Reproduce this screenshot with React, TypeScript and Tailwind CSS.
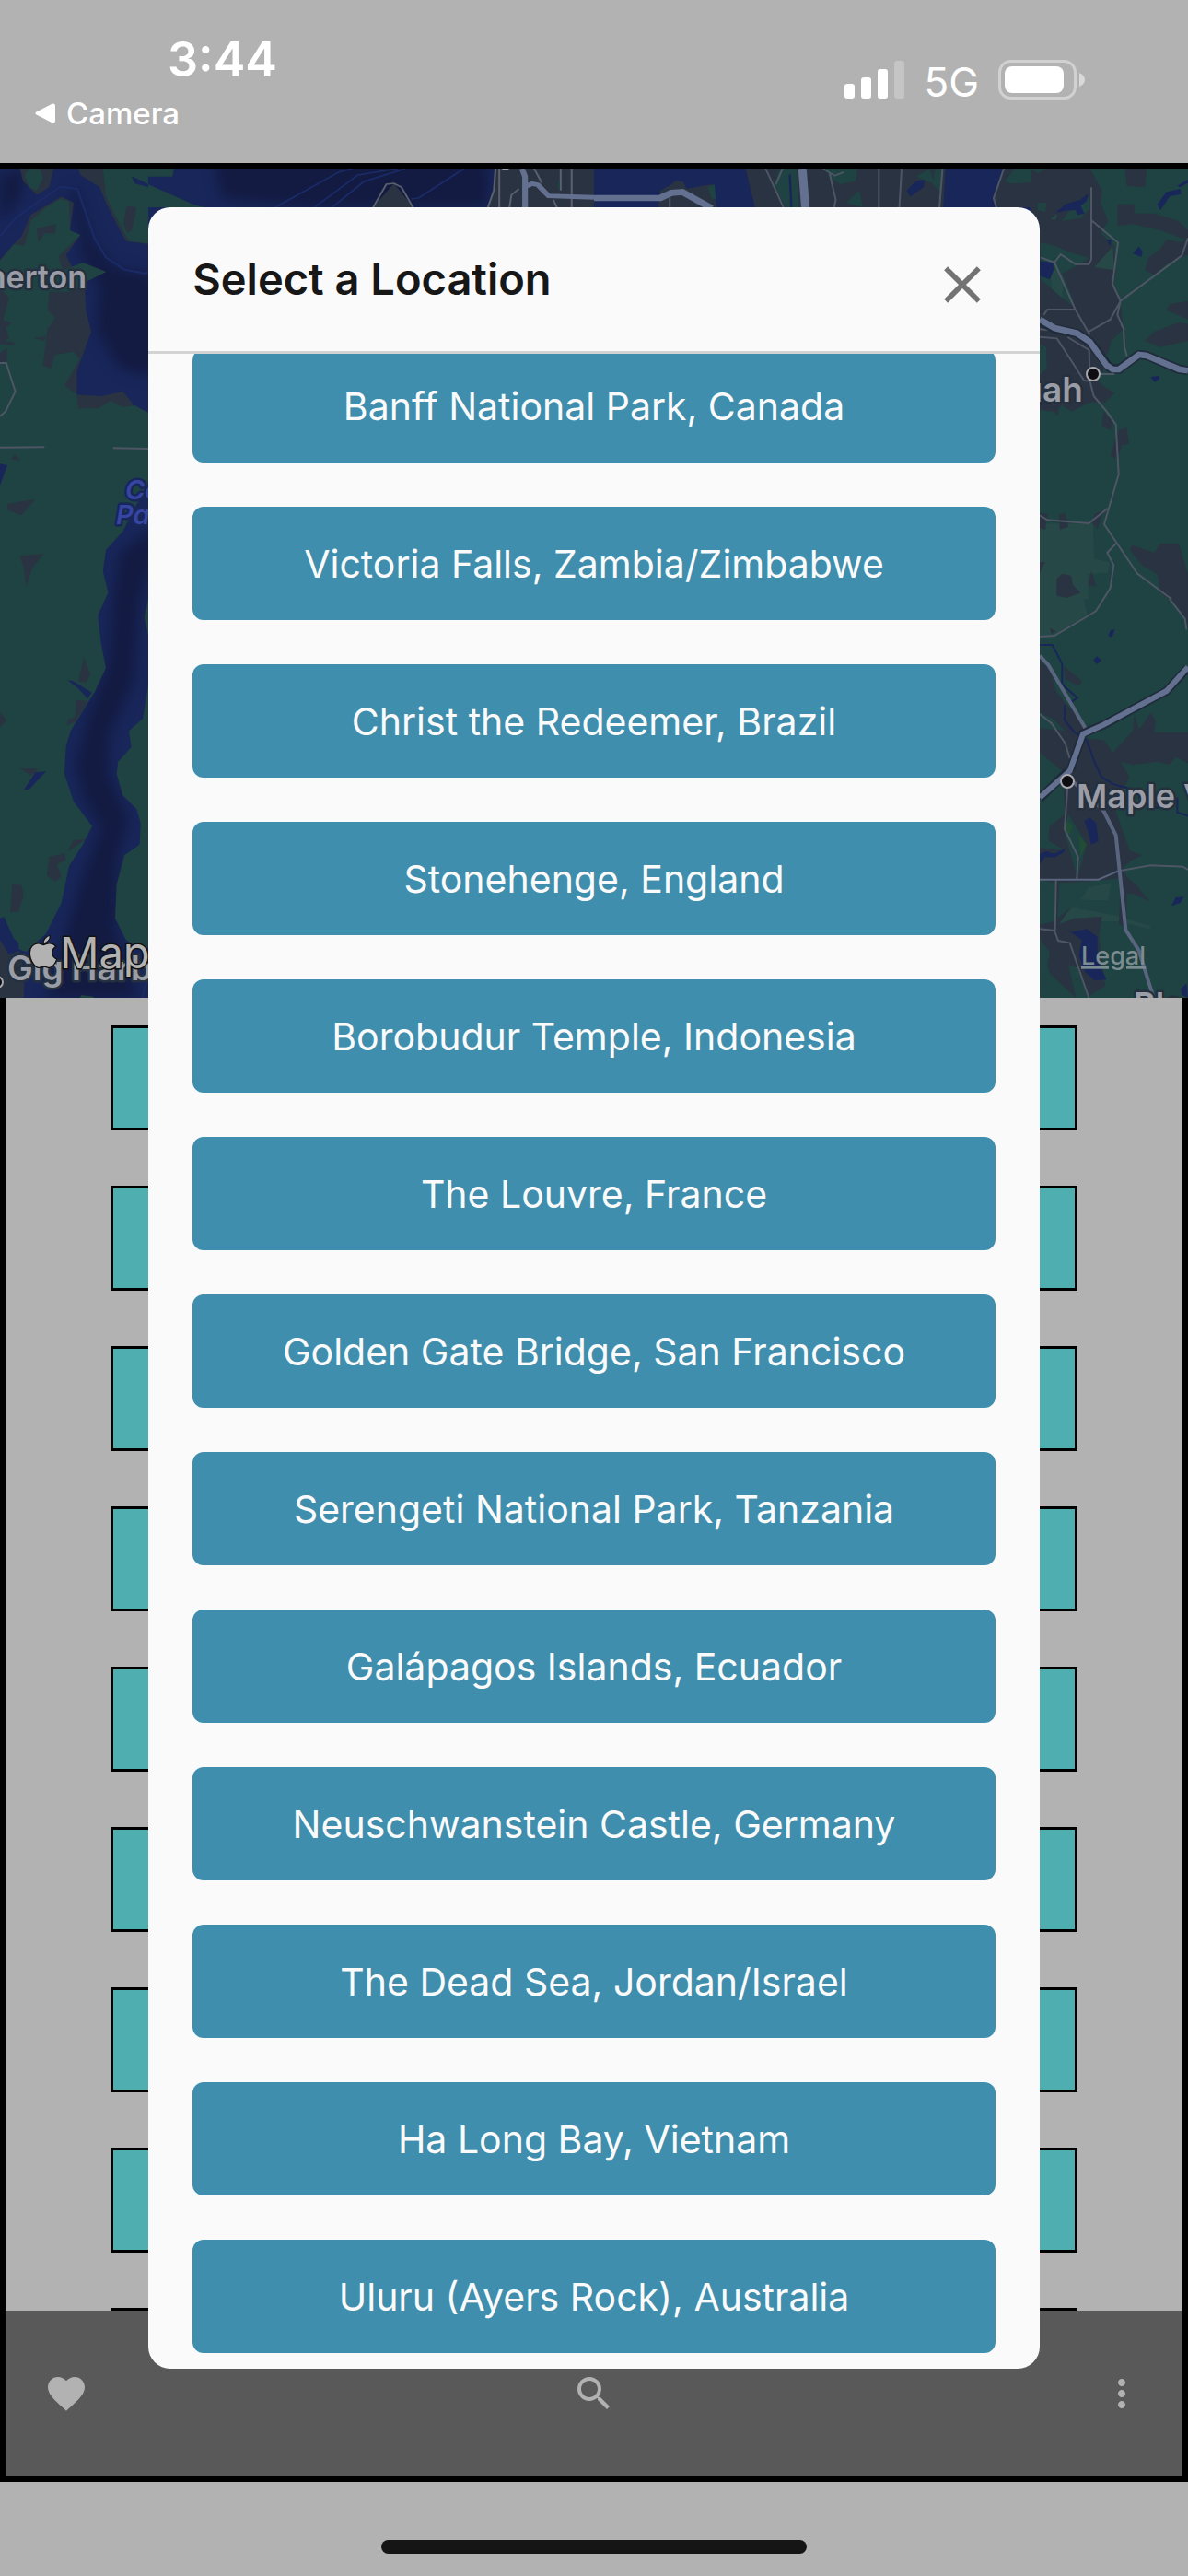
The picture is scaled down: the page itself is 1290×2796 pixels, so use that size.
import { FaApple } from "react-icons/fa";
import { MdClose, MdFavorite, MdMoreVert, MdSearch } from "react-icons/md";

const locations = [
  "Banff National Park, Canada",
  "Victoria Falls, Zambia/Zimbabwe",
  "Christ the Redeemer, Brazil",
  "Stonehenge, England",
  "Borobudur Temple, Indonesia",
  "The Louvre, France",
  "Golden Gate Bridge, San Francisco",
  "Serengeti National Park, Tanzania",
  "Galápagos Islands, Ecuador",
  "Neuschwanstein Castle, Germany",
  "The Dead Sea, Jordan/Israel",
  "Ha Long Bay, Vietnam",
  "Uluru (Ayers Rock), Australia",
];

function StatusBar() {
  return (
    <header className="flex h-[177px] shrink-0 justify-between text-white">
      <div className="flex flex-col">
        <div className="pt-8 pl-[182px] text-[52px] leading-[66px] font-semibold">3:44</div>
        <a href="#camera" className="flex items-center gap-3 pl-[38px] text-[33px] leading-[50px] font-medium">
          <svg viewBox="0 0 22 22" className="size-[22px]" fill="currentColor" aria-hidden="true">
            <path d="M2 9.2 18.500 .8Q22 -.4 22 3V19Q22 22.400 18.500 21.200L2 12.800Q-1.200 11 2 9.200Z" />
          </svg>
          Camera
        </a>
      </div>
      <div className="mt-[65px] mr-28 flex h-11 items-center gap-5">
        <svg viewBox="0 0 66 42" className="h-[42px] w-[66px]" fill="#fff" aria-label="Signal">
          <rect x="0" y="25" width="11" height="16" rx="3" />
          <rect x="18" y="18" width="11" height="23" rx="3" />
          <rect x="36" y="9" width="11" height="32" rx="3" />
          <rect x="54" y="0" width="11" height="41" rx="3" fillOpacity=".25" />
        </svg>
        <span className="pt-1 text-[44px] leading-[44px]">5G</span>
        <svg viewBox="0 0 95 44" className="h-11 w-[95px]" fill="#fff" aria-label="Battery">
          <rect x="2.500" y="1.500" width="82" height="40" rx="12" fill="none" stroke="#fff" strokeOpacity=".4" strokeWidth="3" />
          <rect x="8" y="7" width="64" height="29" rx="8" />
          <path d="M89 14Q95 17 95 21.500Q95 26 89 29Z" fillOpacity=".5" />
        </svg>
      </div>
    </header>
  );
}

function WestShore() {
  return (
    <>
      {/* Deep channels */}
      <g fill="#131b42" filter="url(#soft)">
        <path d="M232 170H530V225H330L240 215Z" />
        <path d="M0 190 28 184 22 215 0 240Z" />
        <path d="M85 205 100 260 125 290 170 300V410L130 400 105 360 108 310 90 280 76 205Z" />
        <path d="M170 570 130 600 122 655 118 720 95 780 82 830 92 870 110 898 90 950 72 1010 50 1083H150L125 1010 128 930 140 890 118 840 118 800 145 740 152 650 170 600Z" />
      </g>
      <g transform="translate(0 170) scale(.33333)">
        <path fill="#2a3341" d="M65 39 75 80 120 125 160 100 175 39ZM255 39 262 60 325 100 345 150 380 220 410 275 483 285V39ZM0 335 40 290 70 260 100 190 150 160 200 130 240 150 228 240 262 255 215 320 240 370 330 368 345 375 275 410 280 500 297 570 250 700 250 775 330 780 400 765 430 800 440 830 483 830V1060L420 1180 400 1220 345 1280 335 1350 352 1420 320 1490V1500H0Z" />
        <path fill="#1e4342" d="M80 60 95 100 120 110 140 70 130 39H95ZM335 39 345 130 380 200 420 275 483 283V39ZM0 340 45 285 80 290 100 210 150 165 195 138 225 145 228 240 262 255 190 325 205 370 270 345 345 375 275 410 230 440 160 440 155 500 180 525 155 560 150 600 140 680 165 690 180 645 240 635 260 660 210 745 250 775 255 820 320 820 360 795 400 815 440 810 483 835V1060L420 1180 400 1220 345 1280 335 1350 352 1420 320 1490V1500H0V610L30 590 10 530 30 460 0 430Z" />
        <path fill="#2a3341" d="M120 235 183 220 180 250 145 250 125 280ZM412 162 445 165 430 240 415 250 402 220ZM0 530 38 540 15 560 12 600 48 605 45 615 0 610ZM110 590 150 585 145 600ZM25 1130 115 1115 70 1168 22 1150ZM65 1300 142 1293 105 1340 85 1400 78 1340ZM0 640 22 625V665L0 670ZM35 985 50 970 65 990Z" />
        <path fill="#18265a" d="M428 65 483 70V100L440 88ZM0 1000 24 1005 0 1070Z" />
        <g fill="none" stroke="#4e5565" strokeWidth="6">
          <path d="M0 672H20L50 765 18 830 0 845M0 947 145 946M368 949 483 951" />
          <path stroke="#1b2b68" d="M0 260 50 200 195 98 252 105 308 265 345 328 405 368 470 380 483 377" />
        </g>
      </g>
      <g transform="translate(0 650) scale(.33333)">
        <path fill="#1e4342" d="M0 0H330L318 50 330 150 345 225 310 300 230 430 215 480 210 570 240 660 300 740 270 800 225 870 200 990 150 1090 85 1150 60 1140 15 1040 0 1040ZM483 280 465 390 420 430 428 482 385 530 380 570 400 640 445 685 458 730 455 800 405 835 380 930 375 1040 410 1110 440 1130 483 1135ZM483 0 470 60 483 120Z" />
        <path fill="#2a3341" d="M273 190 295 245 280 272 255 270ZM247 330 288 332 245 400 217 412 222 392 245 385ZM160 840 210 828 215 850 185 865 200 905 180 920 153 900ZM40 930 70 932 77 965 60 1020 33 1020ZM218 825 240 785 280 783ZM0 370 22 395 0 418ZM65 552 122 552 120 562 100 575ZM0 1080 60 1140 80 1210 78 1299H0Z" />
        <path fill="#18265a" d="M220 265 238 268 300 305 285 325 255 292ZM78 622 115 565 150 562 95 620ZM0 1040 15 1035 22 1085 60 1120 62 1145 30 1160 0 1110Z" />
        <path fill="#1e4342" d="M260 1299 265 1290 305 1295V1299Z" />
        <path fill="none" stroke="#1b2b68" strokeWidth="5" d="M465 1299Q470 1260 483 1240" />
      </g>
    </>
  );
}

function NorthShore() {
  return (
    <>
      <g transform="scale(.41135 .33333)">
        <path fill="#2a3341" d="M985 675 1040 597 1090 675ZM1308 549 1300 620 1288 675H1568V549Z" />
        <path fill="none" stroke="#5a606c" strokeWidth="5" d="M985 675 1020 600 1040 597 1060 610 1090 675M1308 549 1304 620 1288 675M1318 549V675M1345 675 1350 635 1370 615M1410 549 1430 595M1509 549V675M1480 549V620M1460 650 1470 675" />
        <path fill="none" stroke="#1b2b68" strokeWidth="5" d="M727 675 895 560 930 549M830 675 945 570 1050 549M877 675 960 592 1070 549M1085 648 1105 645 1225 549" />
        <path fill="none" stroke="#64708f" strokeWidth="15" d="M1378 549 1386 575V675M1386 608 1405 598 1420 602 1448 638 1568 643" />
        <path fill="#1e4342" d="M1473 590H1478V615H1473ZM440 549H459L455 575H350L400 605 510 665 540 675H391V549Z" />
        <circle cx="1334" cy="540" r="14" fill="#a0a0a8" />
      </g>
      <g transform="translate(645 0) scale(.41135 .33333)">
        <path fill="#18265a" d="M0 549H400L425 675H0Z" />
        <path fill="#2a3341" d="M170 675 175 620 205 600 215 588 235 592 245 615 310 600 325 675ZM400 549 425 675H1568V549Z" />
        <path fill="#1e4342" d="M490 549H535L540 675H505L475 600ZM605 549H695L690 590 650 600 625 580ZM300 610 318 600 322 650 310 645ZM665 660 700 620 710 675ZM850 575 885 549 900 600ZM900 549H918L914 625 895 600ZM1085 590 1110 549H1185L1220 590 1100 598Z" />
        <path fill="#18265a" d="M928 549H1082L1055 650 1062 675H922ZM825 620 850 590 873 585 870 610 835 640ZM514 570 520 568 524 675H518Z" />
        <path fill="none" stroke="#4e5565" strokeWidth="5" d="M453 549 500 675M498 549 480 600M605 549 635 572 660 560M622 565 638 650 634 675M752 549V675M812 549 806 675M920 549 912 675M1082 549 1055 645 1062 675M200 645V675" />
        <path fill="none" stroke="#64708f" strokeWidth="20" d="M0 645H175L205 628 233 625 310 678" />
        <path fill="none" stroke="#64708f" strokeWidth="22" d="M550 549 558 675" />
      </g>
    </>
  );
}

function EastShore() {
  return (
    <>
      <g transform="translate(1120 170) scale(.33333)">
        <path fill="#2a3341" d="M0 39H510V1500H0Z" />
        <path fill="#1e4342" d="M0 39H45L20 55ZM190 39H305L310 95 370 100 375 39H510V240L480 210 400 185H335V155H280V225L330 220 420 240 500 270 490 280 440 270 420 300 380 330 370 370 400 385 440 350 510 320V470L450 480 440 500 510 530V545L480 540 400 570 370 600 420 620 510 600V1360L480 1260 420 1260 400 1290 330 1265 320 1280 360 1330 410 1360 420 1420 500 1480 510 1500H27V825L70 830 100 810 130 830 190 800 240 800 270 770 230 745 215 720 240 690 230 650 250 640 260 600 300 560 290 480 265 415 275 380 270 290 225 250 250 210 225 150 230 110ZM20 150 50 150 45 180 20 175ZM30 280 75 290 120 310 190 330 140 360 100 380 130 450 140 490 100 460 30 400ZM100 210 120 180 190 130 190 170 160 200ZM27 610 48 620 50 690 27 710Z" />
        <path fill="#264846" d="M27 1195H200L205 1310 255 1320 250 1355 185 1360V1480L170 1500H27ZM205 360 250 310 265 290 270 370ZM62 370 90 365 105 400 100 460 65 430ZM60 205 85 185 80 205Z" />
        <path fill="#2a3341" d="M82 1375 100 1358 130 1365 135 1395 160 1420 115 1437 82 1430ZM285 890 310 882 318 935 295 940 280 985 258 975 270 930ZM235 830 265 865 260 892 228 878ZM195 1350 212 1400 185 1395ZM90 1165 110 1160 120 1205 92 1215ZM27 1160 52 1165 45 1215 27 1210ZM205 1165 235 1150 215 1215 200 1195ZM27 1320 45 1320 27 1355ZM60 815 90 820 85 845Z" />
        <path fill="#18265a" d="M80 182 110 155 160 140 185 120 180 145 160 160 172 185 150 190 145 175 120 175ZM410 155 440 115 485 105 488 122 450 130 420 175ZM475 95 510 75V85L485 100ZM27 340 70 345 72 370 60 400 27 388ZM330 315 350 293 362 310 358 327ZM245 270 262 270 255 292ZM388 718 415 713 418 722 402 735ZM388 722 398 715Z" />
        <path fill="none" stroke="#4e5565" strokeWidth="6" d="M195 100V335L187 350H143L95 318 75 345 30 328M195 207 282 280 264 415 290 470 280 515 300 560 303 620 311 650M290 470 490 322 510 265M290 470 257 530 187 570M75 345 143 498 190 580M143 498H52L40 515M27 562 60 565M27 587 83 592 172 730H190M118 588 188 630 190 730 203 780 245 830 275 872 284 1035 237 1197 345 1358 455 1440 500 1500M27 1168 52 1183 187 1194 248 1145M275 1260 247 1290 268 1330 257 1405 210 1480 175 1500M220 708H270M292 545 303 565" />
        <path fill="none" stroke="#1f2a3a" strokeWidth="30" d="M27 535 75 560 148 575 190 603 255 688 285 692 350 645 375 648 480 692 510 697" />
        <path fill="none" stroke="#64708f" strokeWidth="20" d="M27 530 75 558 148 575 190 603 245 680 265 693H285L350 645 375 648 480 692 510 697" />
      </g>
      <g transform="translate(1120 650) scale(.33333)">
        <path fill="#1e4342" d="M27 0H510V1299H27Z" />
        <path fill="#264846" d="M27 0H170L182 50 70 120 27 122ZM185 940 260 925 250 982 160 980ZM135 1005 270 1030 388 1065 385 1075 280 1050 110 1050 60 1075Z" />
        <path fill="#2a3341" d="M455 0H510V100L500 60ZM60 95 80 105 65 115ZM105 220 165 268 155 285 110 260ZM27 200 60 230 80 300 110 340 170 400 180 455 235 460 265 500 330 430 335 375 350 425 390 370 405 400 400 435H510V535L470 515 450 540 410 530 330 540 290 530 320 580 300 620 270 680 320 820 360 835 320 855 300 875 310 905 340 930 385 985 330 960 310 960 310 1070 285 1060 290 910 240 915 180 920 85 925 130 1000 90 1060 140 1040 230 1035 220 1100 240 1260 180 1299H145L60 1220 27 1100V1060L75 1050 75 925 27 915V810L110 820 27 770 110 700 100 560 27 500V420L110 430 70 390 27 370Z" />
        <path fill="#1e4342" d="M27 670 60 720 55 790 27 810ZM120 700 180 800 150 910 105 750ZM27 940 75 940V1000L27 1040ZM90 930H165L145 990 85 1040ZM27 1110 60 1150 45 1220 27 1260ZM120 1190 150 1200 185 1299H145Z" />
        <path fill="#214c35" d="M115 720 135 740 125 765 110 760ZM155 770 180 800 160 840Z" />
        <path fill="#18265a" d="M250 120 258 102 272 100 262 125ZM202 198 214 187 228 200 212 213ZM172 725 190 712 210 730 218 790 195 800 182 750ZM27 830 50 822 75 830 110 812 105 825 75 842 45 840 27 865ZM105 1070 130 1085 180 1075 215 1100 215 1150 225 1200 245 1240 205 1242 175 1215 155 1160 165 1110ZM456 1000 470 972 497 970 485 990ZM487 1270 505 1252 510 1299 490 1290Z" />
        <path fill="none" stroke="#18265a" strokeWidth="6" d="M27 150H68L100 212V280L150 322 130 335M108 345V395L140 435 180 460 205 530 228 580 270 605 330 620 370 665 410 680 475 650V695L510 707" />
        <path fill="none" stroke="#4e5565" strokeWidth="6" d="M27 123 75 120 210 40 235 0M450 0 500 65 505 100M27 375 65 405 110 470 125 520M27 1075 75 1080 87 1113 125 1120 187 1299M80 915 77 1080M118 610 108 750 152 840 148 912M290 885 388 868 493 872 510 882" />
        <path fill="none" stroke="#59647e" strokeWidth="6" d="M27 914H218L290 883" />
        <path fill="none" stroke="#1f2a3a" strokeWidth="28" d="M27 650 130 550 168 438 235 410 440 300 510 225" />
        <path fill="none" stroke="#59647e" strokeWidth="12" d="M27 185 55 215 175 420M130 590 235 690 275 770 307 1078 350 1145 398 1299" />
        <path fill="none" stroke="#64708f" strokeWidth="18" d="M27 647 125 560 168 440 235 410 440 300 510 222" />
      </g>
    </>
  );
}

function MapView() {
  return (
    <svg
      viewBox="0 183 1290 900"
      preserveAspectRatio="xMidYMid slice"
      className="h-[900px] w-full shrink-0 bg-[#18265a]"
      role="img"
      aria-label="Map"
    >
      <defs>
        <filter id="soft" x="-20%" y="-20%" width="140%" height="140%" colorInterpolationFilters="sRGB">
          <feGaussianBlur stdDeviation="7" />
        </filter>
      </defs>
      <WestShore />
      <NorthShore />
      <EastShore />
      <g fill="#9a9da6" stroke="#25303f" strokeWidth="5" paintOrder="stroke" strokeLinejoin="round" fontWeight="600">
        <text x="94" y="313" textAnchor="end" fontSize="34">Bremerton</text>
        <text x="1176" y="436" textAnchor="end" fontSize="37">Issaquah</text>
        <text x="1169" y="877" fontSize="36">Maple Valley</text>
        <text x="1231" y="1103" fontSize="36">Black Diamond</text>
        <text x="8" y="1064" fontSize="37">Gig Harbor</text>
        <g fill="#3545a0" stroke="#18265a" fontSize="29" fontStyle="italic">
          <text x="136" y="542">Colvos</text>
          <text x="126" y="569">Passage</text>
        </g>
      </g>
      <g fill="#0e0e12" stroke="#a8a8ae" strokeWidth="2">
        <circle cx="1187" cy="406" r="7" />
        <circle cx="1159" cy="848" r="7" />
        <circle cx="-3" cy="1066" r="6" />
      </g>
      <FaApple x="31" y="1013" className="h-10 w-8 overflow-visible" color="#b2b2b2" stroke="#111" strokeWidth="16" />
      <text x="65" y="1051" fontSize="47" fill="#b2b2b2" stroke="#111" strokeWidth="3" paintOrder="stroke">Maps</text>
      <a href="#legal">
        <text x="1174" y="1047" fontSize="27" fontWeight="500" fill="#7b8b90" textDecoration="underline">Legal</text>
      </a>
    </svg>
  );
}

function TabBar() {
  return (
    <nav className="flex h-[180px] shrink-0 items-center justify-between bg-[#595959] px-[42px] text-[#b2b2b2]">
      <button type="button" aria-label="Favorites"><MdFavorite className="size-12" /></button>
      <button type="button" aria-label="Search"><MdSearch className="size-12" /></button>
      <button type="button" aria-label="More"><MdMoreVert className="size-12" /></button>
    </nav>
  );
}

function LocationDialog() {
  return (
    <section role="dialog" aria-labelledby="dialog-title" className="flex w-3/4 flex-col overflow-hidden rounded-3xl bg-[#fafafa]">
      <div className="flex h-[159px] shrink-0 items-center justify-between border-b-[3px] border-[#d3d3d3] px-12">
        <h1 id="dialog-title" className="text-[47px] leading-[60px] font-semibold text-[#171717]">Select a Location</h1>
        <button type="button" aria-label="Close" className="mt-3 mr-0.5 text-[#737373]">
          <MdClose className="size-[68px]" />
        </button>
      </div>
      <div className="min-h-0 flex-1 overflow-hidden px-12">
        <ul className="-mt-[5px] flex flex-col gap-12 pb-4">
          {locations.map((name) => (
            <li key={name}>
              <button type="button" className="h-[123px] w-full rounded-xl bg-[#3f8ead] text-[41px] leading-[54px] text-[#fafafa]">
                {name}
              </button>
            </li>
          ))}
        </ul>
      </div>
    </section>
  );
}

export default function App() {
  return (
    <div className="relative flex h-screen flex-col overflow-hidden bg-[#b2b2b2] font-['Inter','Liberation_Sans',sans-serif]">
      <StatusBar />
      <main className="flex min-h-0 flex-1 flex-col border-y-[6px] border-black">
        <MapView />
        <div className="flex min-h-0 flex-1 flex-col border-x-[6px] border-black">
          <div className="flex min-h-0 flex-1 flex-col gap-[60px] overflow-hidden px-[114px] pt-[30px]">
            {locations.slice(0, 9).map((name) => (
              <div key={name} className="h-[114px] shrink-0 border-[3px] border-black bg-[#4faeb0]" />
            ))}
          </div>
          <TabBar />
        </div>
      </main>
      <footer className="flex h-[102px] shrink-0 justify-center pt-[63px]">
        <div className="h-[15px] w-[462px] rounded-full bg-[#151515]" />
      </footer>
      <div className="absolute inset-0 flex justify-center py-[225px]">
        <LocationDialog />
      </div>
    </div>
  );
}
